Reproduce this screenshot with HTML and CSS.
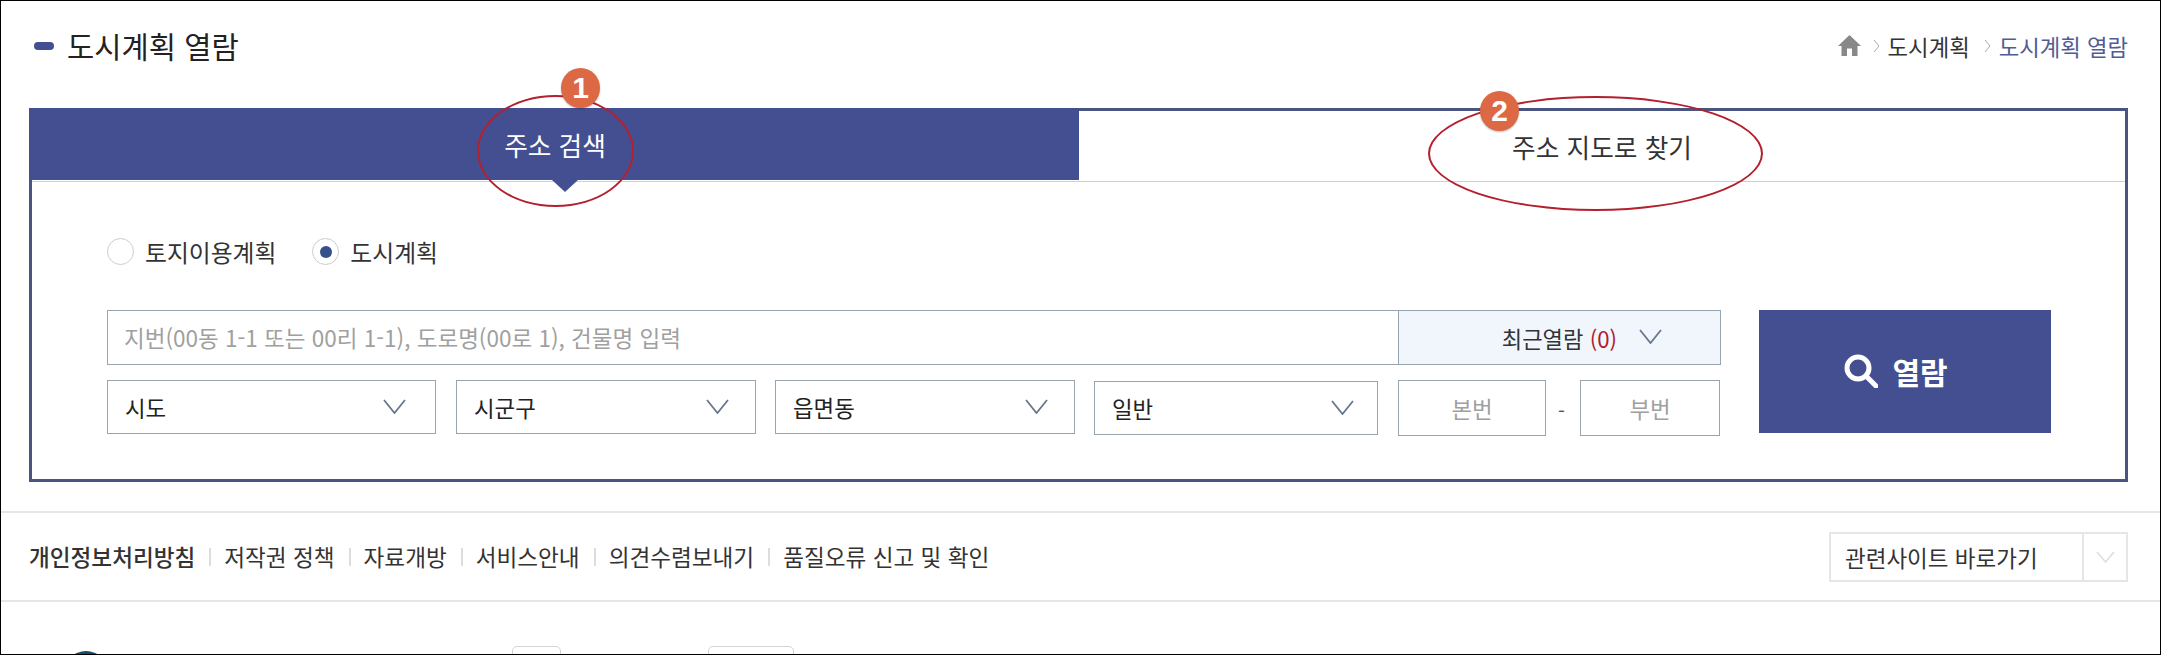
FILE: index.html
```html
<!DOCTYPE html>
<html lang="ko">
<head>
  <meta charset="UTF-8">
  <meta name="viewport" content="width=device-width, initial-scale=1">
  <title>도시계획 열람</title>
  <link rel="stylesheet" href="styles.css">
</head>
<body>
  <div class="page">
    <!-- Title and breadcrumb -->
    <header class="page-head">
      <h1 class="page-title"><span class="title-mark"></span>도시계획 열람</h1>
      <nav class="breadcrumb">
        <svg class="home-icon" width="23" height="21" viewBox="0 0 23 21"><path d="M11.500 0 23 11h-3.500v10H14v-7.500H9V21H3.500V11H0z"/></svg>
        <svg class="crumb-arrow" width="7" height="14" viewBox="0 0 7 14"><path d="M1 1l5 6-5 6"/></svg>
        <span>도시계획</span>
        <svg class="crumb-arrow" width="7" height="14" viewBox="0 0 7 14"><path d="M1 1l5 6-5 6"/></svg>
        <span class="crumb-current">도시계획 열람</span>
      </nav>
    </header>

    <!-- Search panel -->
    <section class="panel">
      <div class="tabs">
        <div class="tab tab-active">주소 검색</div>
        <div class="tab">주소 지도로 찾기</div>
      </div>
      <div class="panel-body">
        <div class="radio-group">
          <label class="radio"><span class="radio-dot"></span>토지이용계획</label>
          <label class="radio"><span class="radio-dot radio-checked"></span>도시계획</label>
        </div>
        <div class="search-area">
          <div class="fields">
            <div class="address-row">
              <input class="address-input" type="text" placeholder="지번(00동 1-1 또는 00리 1-1), 도로명(00로 1), 건물명 입력">
              <div class="recent">
                <span>최근열람 <em>(0)</em></span>
                <svg class="chevron" width="23" height="15" viewBox="0 0 23 15"><path d="M1 1l10.500 13L22 1"/></svg>
              </div>
            </div>
            <div class="select-row">
              <div class="select select-sido">시도<svg class="chevron" width="23" height="15" viewBox="0 0 23 15"><path d="M1 1l10.500 13L22 1"/></svg></div>
              <div class="select select-mid">시군구<svg class="chevron" width="23" height="15" viewBox="0 0 23 15"><path d="M1 1l10.500 13L22 1"/></svg></div>
              <div class="select select-mid">읍면동<svg class="chevron" width="23" height="15" viewBox="0 0 23 15"><path d="M1 1l10.500 13L22 1"/></svg></div>
              <div class="select select-type">일반<svg class="chevron" width="23" height="15" viewBox="0 0 23 15"><path d="M1 1l10.500 13L22 1"/></svg></div>
              <input class="num-input num-main" type="text" placeholder="본번">
              <span class="dash">-</span>
              <input class="num-input num-sub" type="text" placeholder="부번">
            </div>
          </div>
          <button class="view-btn">
            <svg width="34" height="34" viewBox="0 0 34 34"><circle cx="14" cy="14" r="11"/><path d="M22 22l10 10"/></svg>
            열람
          </button>
        </div>
      </div>
    </section>

    <!-- Footer links -->
    <div class="site-links">
      <ul class="link-list">
        <li class="link-strong">개인정보처리방침</li>
        <li>저작권 정책</li>
        <li>자료개방</li>
        <li>서비스안내</li>
        <li>의견수렴보내기</li>
        <li>품질오류 신고 및 확인</li>
      </ul>
      <div class="related">
        <span class="related-label">관련사이트 바로가기</span>
        <span class="related-arrow"><svg width="19" height="12" viewBox="0 0 19 12"><path d="M1 1l8.500 10L18 1"/></svg></span>
      </div>
    </div>

    <!-- Cut off by the bottom of the window -->
    <div class="page-end">
      <span class="end-logo"></span>
      <span class="end-box end-box-a"></span>
      <span class="end-box end-box-b"></span>
    </div>

    <!-- Red annotations over the tabs -->
    <div class="mark-ring ring-one"></div>
    <div class="mark-ring ring-two"></div>
    <div class="mark-badge badge-one">1</div>
    <div class="mark-badge badge-two">2</div>
  </div>
</body>
</html>
```

FILE: styles.css
```css
* {
  box-sizing: border-box;
}
body {
  margin: 0;
  background: #fff;
  font-family: "Noto Sans CJK KR", "Noto Sans", sans-serif;
  color: #333;
}
/* Whole window with the thin black edge */
.page {
  position: relative;
  width: 2161px;
  height: 655px;
  border: 1px solid #000;
  overflow: hidden;
}
.page-head {
  display: flex;
  justify-content: space-between;
  align-items: center;
  height: 107px;
  padding: 0 32px 18px 33px;
}
.page-title {
  display: flex;
  align-items: center;
  margin: 0;
  font-size: 29.600px;
  font-weight: 400;
  line-height: 40px;
  color: #222;
}
.title-mark {
  width: 20px;
  height: 8px;
  margin: 0 13px 0 0;
  border-radius: 4px;
  background: #444f92;
}
.breadcrumb {
  display: flex;
  align-items: center;
  font-size: 22.300px;
  color: #333;
}
.home-icon {
  fill: #888;
  margin-right: 12px;
}
.crumb-arrow {
  fill: none;
  stroke: #aaa;
  stroke-width: 1;
  margin-right: 8px;
}
.breadcrumb span + .crumb-arrow {
  margin-left: 14px;
}
.crumb-current {
  color: #515c94;
}
.panel {
  height: 374px;
  margin: 0 32px 0 28px;
  border: 3px solid #4a5480;
}
.tabs {
  display: flex;
  height: 71px;
  border-bottom: 1px solid #cfcfcf;
}
.tab {
  flex: 1;
  display: flex;
  justify-content: center;
  align-items: center;
  font-size: 25.700px;
  color: #333;
}
.tab-active {
  position: relative;
  flex: none;
  width: 1050px;
  height: 72px;
  margin: -3px 0 0 -3px;
  padding-left: 2px;
  background: #444f92;
  color: #fff;
}
/* Little arrow under the active tab */
.tab-active::after {
  content: "";
  position: absolute;
  left: 523px;
  top: 72px;
  border-style: solid;
  border-width: 12px 13px 0;
  border-color: #444f92 transparent transparent;
}
.panel-body {
  padding: 56px 0 0 75px;
}
.radio-group {
  display: flex;
  gap: 36px;
  height: 27px;
}
.radio {
  display: flex;
  align-items: center;
  font-size: 23.800px;
  color: #333;
}
.radio-dot {
  display: flex;
  justify-content: center;
  align-items: center;
  width: 27px;
  height: 27px;
  margin-right: 11px;
  border: 1px solid #ccc;
  border-radius: 50%;
}
.radio-checked::after {
  content: "";
  width: 12px;
  height: 12px;
  border-radius: 50%;
  background: #35508a;
}
.search-area {
  display: flex;
  align-items: flex-start;
  gap: 38px;
  margin-top: 45px;
}
.fields {
  width: 1614px;
}
.address-row {
  display: flex;
  height: 55px;
}
.address-input {
  flex: 1;
  padding: 0 16px 2px;
  border: 1px solid #98a4b0;
  border-right: 0;
  border-radius: 0;
  outline: none;
  font: inherit;
  font-size: 22.500px;
}
input::placeholder {
  color: #a0a0a0;
  opacity: 1;
}
.recent {
  display: flex;
  justify-content: flex-end;
  align-items: center;
  gap: 22px;
  width: 323px;
  padding-right: 58px;
  border: 1px solid #98a4b0;
  background: #f1f6fd;
  font-size: 22.200px;
}
.recent em {
  font-style: normal;
  color: #b01c2e;
}
.chevron {
  fill: none;
  stroke: #66768e;
  stroke-width: 1.800;
  margin-bottom: 2px;
}
.select-row {
  display: flex;
  align-items: flex-start;
  margin-top: 15px;
}
.select {
  display: flex;
  justify-content: space-between;
  align-items: center;
  height: 54px;
  padding: 0 29px 0 17px;
  border: 1px solid #98a4b0;
  font-size: 22.400px;
  color: #222;
}
.select-sido {
  width: 329px;
  margin-right: 20px;
}
.select-mid {
  width: 300px;
  margin-right: 19px;
  padding-right: 26px;
}
.select-type {
  width: 284px;
  margin: 1px 20px 0 0;
  padding-right: 23px;
}
.num-input {
  height: 56px;
  border: 1px solid #98a4b0;
  border-radius: 0;
  outline: none;
  font: inherit;
  font-size: 22.400px;
  text-align: center;
}
.num-main {
  width: 148px;
}
.num-sub {
  width: 140px;
}
.dash {
  width: 34px;
  padding: 16px 3px 0 0;
  font-size: 20px;
  text-align: center;
  color: #555;
}
.view-btn {
  display: flex;
  justify-content: center;
  align-items: center;
  gap: 14px;
  width: 292px;
  height: 123px;
  padding: 0 18px 2px 0;
  border: none;
  background: #444f92;
  color: #fff;
  font: inherit;
  font-size: 30px;
  font-weight: 700;
}
.view-btn svg {
  fill: none;
  stroke: #fff;
  stroke-width: 5;
  stroke-linecap: round;
}
/* Footer links row */
.site-links {
  display: flex;
  justify-content: space-between;
  align-items: center;
  height: 91px;
  margin-top: 29px;
  padding: 0 32px 0 28px;
  border-top: 2px solid #e6e6e6;
  border-bottom: 2px solid #e6e6e6;
}
.link-list {
  display: flex;
  margin: 0;
  padding: 0;
  list-style: none;
  font-size: 22.600px;
  color: #333;
}
.link-list li + li {
  position: relative;
  margin-left: 29px;
}
.link-list li + li::before {
  content: "";
  position: absolute;
  left: -15px;
  top: 8px;
  width: 2px;
  height: 18px;
  background: #ddd;
}
.link-strong {
  font-weight: 500;
}
.related {
  display: flex;
  width: 299px;
  height: 50px;
  border: 2px solid #e6e6e6;
  font-size: 22.500px;
  color: #333;
}
.related-label {
  flex: 1;
  display: flex;
  align-items: center;
  padding-left: 14px;
}
.related-arrow {
  display: flex;
  justify-content: center;
  align-items: center;
  width: 44px;
  border-left: 2px solid #e6e6e6;
}
.related-arrow svg {
  fill: none;
  stroke: #ddd;
  stroke-width: 1.500;
}
.page-end {
  display: flex;
  align-items: flex-start;
  height: 60px;
  padding: 44px 0 0 63px;
}
.end-logo {
  width: 44px;
  height: 44px;
  margin-top: 5px;
  border-radius: 50%;
  background: #174a6c;
}
.end-box {
  height: 30px;
  border: 1px solid #d4d4d4;
  border-radius: 5px;
}
.end-box-a {
  width: 49px;
  margin-left: 404px;
}
.end-box-b {
  width: 86px;
  margin-left: 147px;
}
/* Annotations drawn over the screenshot */
.mark-ring {
  position: absolute;
  border: 2px solid #b3202e;
  border-radius: 50%;
}
.ring-one {
  left: 476px;
  top: 94px;
  width: 157px;
  height: 112px;
}
.ring-two {
  left: 1427px;
  top: 95px;
  width: 335px;
  height: 115px;
}
.mark-badge {
  position: absolute;
  display: flex;
  justify-content: center;
  align-items: center;
  width: 39px;
  height: 40px;
  border-radius: 50%;
  background: #dc6844;
  box-shadow: 0 1px 2px rgba(0, 0, 0, 0.25);
  color: #fff;
  font-family: "Liberation Sans", sans-serif;
  font-size: 30px;
  font-weight: 700;
}
.badge-one {
  left: 560px;
  top: 67px;
}
.badge-two {
  left: 1479px;
  top: 90px;
}
```
